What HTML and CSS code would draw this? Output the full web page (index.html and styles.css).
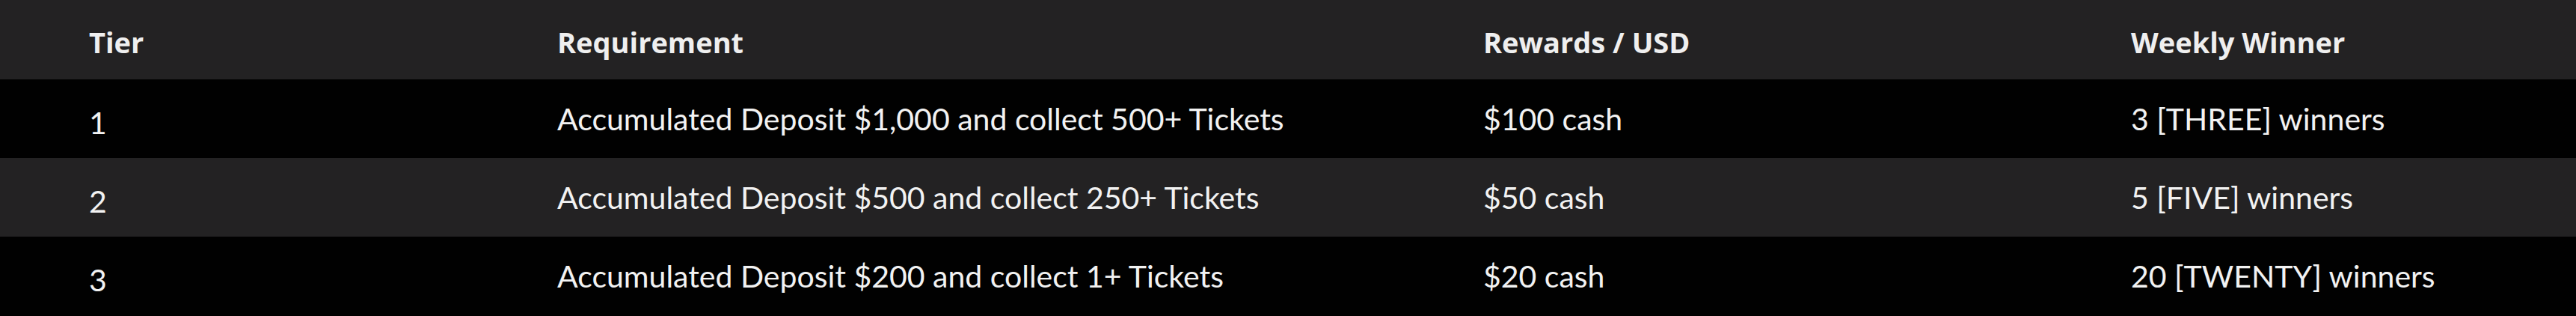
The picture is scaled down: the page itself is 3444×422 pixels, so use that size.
FILE: index.html
```html
<!DOCTYPE html>
<html lang="en">
<head>
<meta charset="utf-8">
<title>Tiers</title>
<link rel="stylesheet" href="styles.css">
</head>
<body>
<table class="tiers">
  <colgroup>
    <col class="c-tier">
    <col class="c-req">
    <col class="c-rew">
    <col class="c-win">
  </colgroup>
  <thead>
    <tr class="head-row">
      <th>Tier</th>
      <th>Requirement</th>
      <th>Rewards / USD</th>
      <th>Weekly Winner</th>
    </tr>
  </thead>
  <tbody>
    <tr class="row dark">
      <td class="tier">1</td>
      <td>Accumulated Deposit $1,000 and collect 500+ Tickets</td>
      <td>$100 cash</td>
      <td>3 [THREE] winners</td>
    </tr>
    <tr class="row light">
      <td class="tier">2</td>
      <td>Accumulated Deposit $500 and collect 250+ Tickets</td>
      <td>$50 cash</td>
      <td>5 [FIVE] winners</td>
    </tr>
    <tr class="row dark">
      <td class="tier">3</td>
      <td>Accumulated Deposit $200 and collect 1+ Tickets</td>
      <td>$20 cash</td>
      <td>20 [TWENTY] winners</td>
    </tr>
  </tbody>
</table>
</body>
</html>
```
FILE: styles.css
```css
html, body {
  margin: 0;
  padding: 0;
  background: #000;
}
body {
  font-family: "Lato", "Noto Sans", sans-serif;
  color: #f2f2f2;
}
.tiers {
  width: 3444px;
  border-collapse: collapse;
  table-layout: fixed;
}
.c-tier { width: 626px; }
.c-req { width: 1238px; }
.c-rew { width: 866px; }
.c-win { width: 714px; }

.head-row {
  background: #232223;
  height: 106px;
}
.head-row th {
  text-align: left;
  font-family: "Open Sans", "Noto Sans", sans-serif;
  font-weight: 700;
  font-size: 38px;
  letter-spacing: 0;
  padding: 6px 0 0 119px;
  color: #efefef;
}
.row {
  height: 105px;
}
.row td {
  font-size: 41px;
  font-weight: 400;
  padding: 0 0 0 119px;
  white-space: nowrap;
}
.row td.tier {
  padding-top: 10px;
}
.dark { background: #010101; }
.light { background: #232223; }
```
